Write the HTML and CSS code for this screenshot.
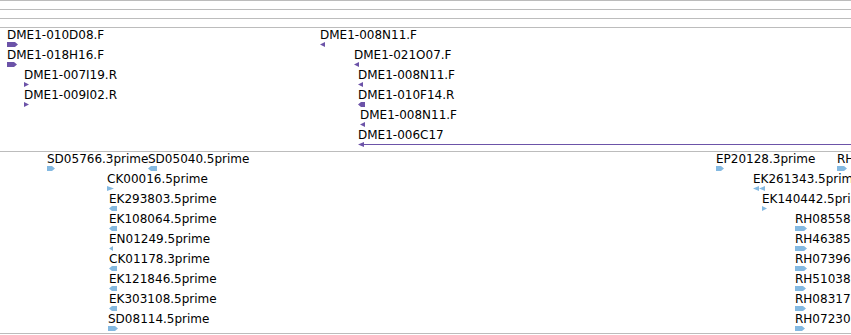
FILE: index.html
```html
<!DOCTYPE html>
<html lang="en">
<head>
<meta charset="UTF-8">
<meta name="viewport" content="width=device-width, initial-scale=1.0">
<title>Annotation tracks</title>
<link rel="stylesheet" href="styles.css">
</head>
<body>
<div class="ruler"></div>
<div class="track track-empty"></div>
<div class="track track-empty"></div>
<div class="track track-empty"></div>

<!-- EST clone ends -->
<div class="track track-est" id="estTrack"></div>

<!-- cDNA 5'/3' reads -->
<div class="track track-cdna" id="cdnaTrack"></div>

<script>
  // each row: [x, label, glyph, glyph width]
  var estRows = [
    [[7, 'DME1-010D08.F', 'r', 11], [320, 'DME1-008N11.F', 'lt', 5]],
    [[7, 'DME1-018H16.F', 'r', 10], [354, 'DME1-021O07.F', 'lt', 5]],
    [[24, 'DME1-007I19.R', 'rt', 5], [358, 'DME1-008N11.F', 'lt', 5]],
    [[24, 'DME1-009I02.R', 'rt', 5], [358, 'DME1-010F14.R', 'l', 7]],
    [[360, 'DME1-008N11.F', 'lt', 5]],
    [[358, 'DME1-006C17', 'line', 520]]
  ];

  var cdnaRows = [
    [[47, 'SD05766.3prime', 'r', 8], [148, 'SD05040.5prime', 'l', 9], [716, 'EP20128.3prime', 'r', 8], [837, 'RH02912.5prime', 'r', 10]],
    [[107, 'CK00016.5prime', 'rt', 7], [753, 'EK261343.5prime', 'll', 12]],
    [[109, 'EK293803.5prime', 'l', 8], [762, 'EK140442.5prime', 'rt', 5]],
    [[109, 'EK108064.5prime', 'l', 8], [795, 'RH08558.5prime', 'r', 12]],
    [[109, 'EN01249.5prime', 'lt', 4], [795, 'RH46385.5prime', 'r', 12]],
    [[109, 'CK01178.3prime', 'l', 8], [795, 'RH07396.5prime', 'r', 12]],
    [[109, 'EK121846.5prime', 'l', 8], [795, 'RH51038.5prime', 'r', 11]],
    [[109, 'EK303108.5prime', 'l', 8], [795, 'RH08317.5prime', 'r', 11]],
    [[108, 'SD08114.5prime', 'r', 10], [795, 'RH07230.5prime', 'r', 10]]
  ];

  // Build the svg shape for a feature glyph
  function glyphShape(type, w) {
    switch (type) {
      case 'r':
        return '<polygon points="0,0 ' + (w - 3) + ',0 ' + w + ',2.5 ' + (w - 3) + ',5 0,5"/>';
      case 'l':
        return '<polygon points="0,2.5 3,0 ' + w + ',0 ' + w + ',5 3,5"/>';
      case 'rt':
        return '<polygon points="0,0 ' + w + ',2.5 0,5"/>';
      case 'lt':
        return '<polygon points="' + w + ',0 0,2.5 ' + w + ',5"/>';
      case 'll':
        return '<polygon points="0,2.5 6,0 6,5"/><polygon points="6,2.5 12,0 12,5"/>';
      case 'line':
        return '<polygon points="0,2.5 6,0 6,5"/><rect x="6" y="2" width="' + (w - 6) + '" height="1"/>';
    }
    return '';
  }

  function buildTrack(id, rows) {
    var track = document.getElementById(id);
    rows.forEach(function (row) {
      var rowEl = document.createElement('div');
      rowEl.className = 'track-row';
      row.forEach(function (f) {
        var feat = document.createElement('div');
        feat.className = 'feature';
        feat.style.left = f[0] + 'px';
        feat.innerHTML = '<div class="feature-label">' + f[1] + '</div>' +
          '<svg class="glyph" width="' + f[3] + '" height="5">' + glyphShape(f[2], f[3]) + '</svg>';
        rowEl.appendChild(feat);
      });
      track.appendChild(rowEl);
    });
  }

  buildTrack('estTrack', estRows);
  buildTrack('cdnaTrack', cdnaRows);
</script>
</body>
</html>
```

FILE: styles.css
```css
body {
    margin: 0;
    padding: 0;
    background: #ffffff;
    font-family: 'DejaVu Sans', Verdana, sans-serif;
    font-size: 12px;
    color: #000000;
    overflow: hidden;
}

.ruler {
    height: 0;
    border-top: 1px solid #bcbcbc;
}

.track {
    border-bottom: 1px solid #bcbcbc;
    overflow: hidden;
}

.track-empty {
    height: 8px;
}

.track-est {
    padding-bottom: 3px;
    fill: #6c53a8;
}

.track-cdna {
    padding-bottom: 1px;
    fill: #84b9e1;
}

.track-row {
    position: relative;
    height: 20px;
}

.feature {
    position: absolute;
    top: 0;
    white-space: nowrap;
}

.feature-label {
    line-height: 14px;
    height: 14px;
}

.glyph {
    display: block;
    overflow: visible;
}
```
